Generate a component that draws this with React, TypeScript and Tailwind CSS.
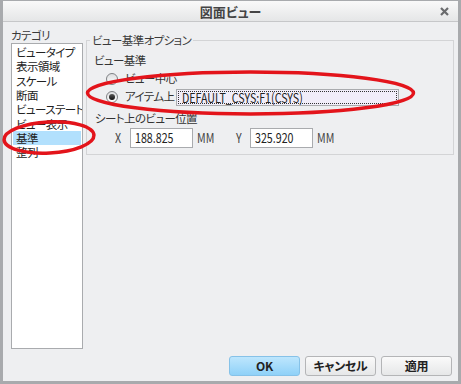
import React from "react";

const categories = ["ビュータイプ", "表示領域", "スケール", "断面", "ビューステート", "ビュー表示", "基準", "整列"];

const Radio = ({ checked }: { checked?: boolean }) => (
    <span className="w-[12px] h-[12px] rounded-full border border-[#7f8184] bg-gradient-to-b from-[#dcdddf] to-[#ffffff] flex items-center justify-center shrink-0">
        {checked && <span className="w-[6px] h-[6px] rounded-full bg-gradient-to-b from-[#5a5a5a] to-[#111]" />}
    </span>
);

const Button = ({ label, primary }: { label: string; primary?: boolean }) => (
    <button
        className={`w-[71px] h-[20px] rounded-[3px] border text-[12px] font-bold text-[#222] leading-none tracking-[-0.3px]
            ${primary ? "border-[#86c2e8] bg-gradient-to-b from-[#bde6fd] to-[#8fd1f8]" : "border-[#b4b5b7] bg-gradient-to-b from-[#fafafa] to-[#e6e7e8]"}`}
    >
        {label}
    </button>
);

// narrow latin text, like the dialog's UI font
const Narrow = ({ children }: { children: React.ReactNode }) => (
    <span className="inline-block origin-left scale-x-[0.82] whitespace-nowrap">{children}</span>
);

export default function App() {
    return (
        <div className="relative w-[461px] h-[384px] border-x-[3px] border-b-[3px] border-t border-[#a8aaad] bg-[#eeeff1] flex flex-col text-[11.5px] tracking-[-0.6px] text-[#333] font-['Noto_Sans_CJK_JP',sans-serif] [font-feature-settings:'palt']">
            {/* Title bar */}
            <div className="h-[21px] shrink-0 border-b border-[#c6c7c9] bg-gradient-to-b from-[#f9f9f9] to-[#e5e6e7] grid grid-cols-[1fr_auto_1fr] items-center">
                <div />
                <span className="text-[13px] font-bold text-[#444] leading-none tracking-normal">図面ビュー</span>
                <div className="flex justify-end pr-[9px]">
                    <svg width="9" height="9" viewBox="0 0 9 9">
                        <path d="M1 1 L8 8 M8 1 L1 8" stroke="#6a6b6d" strokeWidth="2.2" />
                    </svg>
                </div>
            </div>

            {/* Body */}
            <div className="flex-1 flex flex-col pl-[8px] pr-[4px] pt-[3px] pb-[5px]">
                <div className="flex-1 flex">
                    {/* Category list */}
                    <div className="w-[72px] flex flex-col">
                        <div className="h-[18px] pt-[2px] leading-[16px] text-[#3a3a3a]">カテゴリ</div>
                        <div className="flex-1 border border-[#a9abae] bg-white p-[1px] flex flex-col overflow-hidden">
                            {categories.map((c) => (
                                <div
                                    key={c}
                                    className={`h-[14.33px] leading-[14.33px] pl-[3px] whitespace-nowrap text-[#222] ${c === "基準" ? "bg-[#b2e0fd]" : ""}`}
                                >
                                    {c}
                                </div>
                            ))}
                        </div>
                    </div>

                    {/* Options */}
                    <div className="flex-1 ml-[3px]">
                        <fieldset className="mt-[9px] h-[121px] border border-[#d3d4d6] p-0">
                            <legend className="ml-[3px] px-[2px] leading-[12px] text-[#3a3a3a]">ビュー基準オプション</legend>
                            <div className="pl-[7px]">
                                <div className="mt-[7px] leading-[14px]">ビュー基準</div>
                                <div className="mt-[3px] ml-[12px] flex items-center h-[18px]">
                                    <Radio />
                                    <span className="ml-[7px] whitespace-nowrap">ビュー中心</span>
                                </div>
                                <div className="ml-[12px] flex items-center h-[18px]">
                                    <Radio checked />
                                    <span className="ml-[7px] w-[51px] whitespace-nowrap">アイテム上</span>
                                    <div className="w-[223px] h-[17px] border border-[#a9abae] bg-[#f1edf9] p-[1px]">
                                        <div className="h-full border border-dotted border-[#333] pl-[3px] leading-[12px] text-[13px] tracking-normal text-[#222] [font-feature-settings:normal]">
                                            <Narrow>DEFAULT_CSYS:F1(CSYS)</Narrow>
                                        </div>
                                    </div>
                                </div>
                                <div className="mt-[5px] leading-[14px] ml-[1px]">シート上のビュー位置</div>
                                <div className="mt-[3px] ml-[21px] flex items-center h-[20px] text-[#444] text-[13px] tracking-normal [font-feature-settings:normal]">
                                    <span className="w-[15px]"><Narrow>X</Narrow></span>
                                    <div className="w-[63px] h-[20px] border border-[#a9abae] bg-white pl-[4px] leading-[18px] text-[#222]">
                                        <Narrow>188.825</Narrow>
                                    </div>
                                    <span className="ml-[4px] w-[39px]"><Narrow>MM</Narrow></span>
                                    <span className="w-[14px]"><Narrow>Y</Narrow></span>
                                    <div className="w-[63px] h-[20px] border border-[#a9abae] bg-white pl-[4px] leading-[18px] text-[#222]">
                                        <Narrow>325.920</Narrow>
                                    </div>
                                    <span className="ml-[4px]"><Narrow>MM</Narrow></span>
                                </div>
                            </div>
                        </fieldset>
                    </div>
                </div>

                {/* Buttons */}
                <div className="mt-[7px] flex justify-end gap-[5px] pr-[2px]">
                    <Button label="OK" primary />
                    <Button label="キャンセル" />
                    <Button label="適用" />
                </div>
            </div>

            {/* Red annotation ellipses */}
            <svg className="absolute left-[-3px] top-[-1px] pointer-events-none" width="461" height="384">
                <ellipse cx="49" cy="137.5" rx="45" ry="15.5" fill="none" stroke="#e3141b" strokeWidth="3.5" transform="rotate(-3 49 137.5)" />
                <ellipse cx="250.5" cy="93" rx="163" ry="21" fill="none" stroke="#e3141b" strokeWidth="3.5" />
            </svg>
        </div>
    );
}
